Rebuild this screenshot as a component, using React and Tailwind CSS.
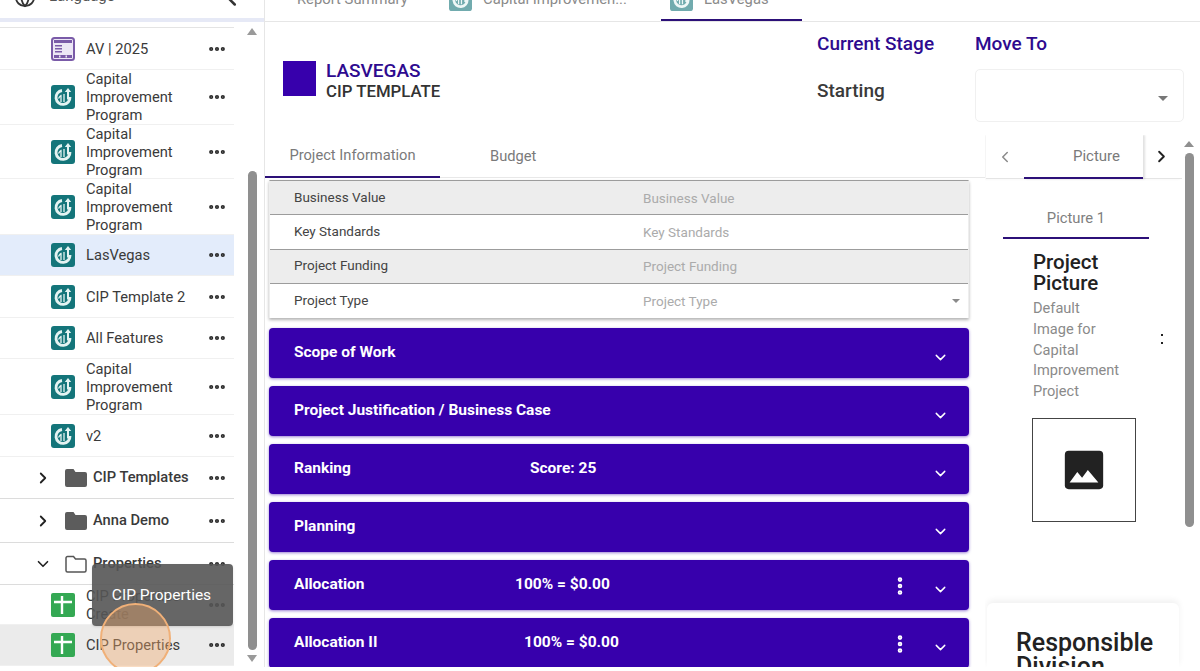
import React from "react";
import { ChevronRight, ChevronDown, ChevronLeft, MoreHorizontal, MoreVertical, Globe } from "lucide-react";

const Cip = ({ size = 24, className = "" }) => (
  <svg width={size} height={size} viewBox="0 0 24 24" className={className}>
    <rect width="24" height="24" rx="3" fill="#14757a" />
    <path d="M11 5.500a7 7 0 1 0 8 6.500" fill="none" stroke="#e4f3f2" strokeWidth="2.800" />
    <path d="M17 3l3.200 4H18v7.500h-2V7h-2.200z" fill="#e4f3f2" />
    <path d="M10 10.500V17M13 9v8M7.500 13.500c1-2 2-3 3-3.500" stroke="#e4f3f2" strokeWidth="1.300" fill="none" />
  </svg>
);
const Av = () => (
  <svg width="24" height="24" viewBox="0 0 24 24">
    <rect x="1" y="1" width="22" height="22" rx="2.500" fill="#ece7f5" stroke="#7a5ba8" strokeWidth="2" />
    <path d="M3 3h18v3H3zM4 8h7v1.500H4zM4 11h7v1.500H4zM4 14h7v1.500H4zM3 18h18v3H3z" fill="#7a5ba8" />
    <path d="M8 18.500h1.500v2H8zM14.500 18.500H16v2h-1.500z" fill="#ece7f5" />
  </svg>
);
const Sheet = () => (
  <svg width="24" height="24" viewBox="0 0 24 24">
    <rect width="24" height="24" rx="2" fill="#34a853" />
    <path d="M3 9h18M11 3v18" stroke="#fff" strokeWidth="2.400" fill="none" />
  </svg>
);
const Folder = ({ open }) =>
  open ? (
    <svg width="22" height="18" viewBox="0 0 22 18">
      <path d="M1 3a1.500 1.500 0 0 1 1.500-1.500h6L10.500 4h9A1.500 1.500 0 0 1 21 5.500v10a1.500 1.500 0 0 1-1.500 1.500h-17A1.500 1.500 0 0 1 1 15.500z" fill="#fff" stroke="#555" strokeWidth="1.500" />
    </svg>
  ) : (
    <svg width="22" height="18" viewBox="0 0 22 18">
      <path d="M0 2a2 2 0 0 1 2-2h6.500l2 3H20a2 2 0 0 1 2 2v11a2 2 0 0 1-2 2H2a2 2 0 0 1-2-2z" fill="#5c5c5c" />
    </svg>
  );

const Dots = () => <MoreHorizontal size={20} strokeWidth={3} className="text-[#2b2b2b] shrink-0" />;

const FileRow = ({ h, icon, lines, bg = "" }) => (
  <div className={`flex items-center pl-[51px] pr-[7px] border-b border-[#f0f0f0] ${bg}`} style={{ height: h }}>
    <div className="w-[35px] shrink-0 flex">{icon}</div>
    <div className="flex-1 text-[14.700px] leading-[18px] text-[#3a3a3a]">
      {lines.map((l) => (
        <div key={l}>{l}</div>
      ))}
    </div>
    <Dots />
  </div>
);

const CAP = ["Capital", "Improvement", "Program"];

const FolderRow = ({ h, label, open }) => (
  <div className="flex items-center pl-[34px] pr-[7px] border-b border-[#dcdcdc]" style={{ height: h }}>
    <div className="w-[31px] shrink-0">
      {open ? <ChevronDown size={18} strokeWidth={2.200} className="text-[#222]" /> : <ChevronRight size={18} strokeWidth={2.400} className="text-[#222]" />}
    </div>
    <div className="w-[28px] shrink-0 flex">
      <Folder open={open} />
    </div>
    <div className="flex-1 text-[14.700px] font-medium text-[#3a3a3a]">{label}</div>
    <Dots />
  </div>
);

const Sidebar = () => (
  <aside className="relative w-[265px] shrink-0 h-full flex flex-col border-r border-[#e6e6e6] overflow-hidden">
    <div className="h-[18px] shrink-0 overflow-hidden">
      <div className="flex items-center h-[24px] -mt-[15px] pl-[14px] w-full">
        <Globe size={22} className="text-[#333]" />
        <span className="ml-[13px] w-[72px] text-[15px] leading-[18px] -mt-[2px] text-[#555]">Language</span>
        <ChevronDown size={14} strokeWidth={3} className="ml-[32px] text-[#333]" />
        <ChevronLeft size={30} strokeWidth={2} className="ml-auto mr-[18px] text-[#333]" />
      </div>
    </div>
    <div className="h-[4px] shrink-0 bg-[#e6e9f6]" />
    <div className="flex flex-1 min-h-0 pt-[5px]">
      <div className="w-[234px] shrink-0 border-t border-[#e4e4e4]">
        <FileRow h={42} icon={<Av />} lines={["AV | 2025"]} />
        <FileRow h={55} icon={<Cip />} lines={CAP} />
        <FileRow h={54} icon={<Cip />} lines={CAP} />
        <FileRow h={56} icon={<Cip />} lines={CAP} />
        <FileRow h={41} icon={<Cip />} lines={["LasVegas"]} bg="bg-[#e3ecfb]" />
        <FileRow h={42} icon={<Cip />} lines={["CIP Template 2"]} />
        <FileRow h={41} icon={<Cip />} lines={["All Features"]} />
        <FileRow h={56} icon={<Cip />} lines={CAP} />
        <FileRow h={42} icon={<Cip />} lines={["v2"]} />
        <FolderRow h={42} label="CIP Templates" />
        <FolderRow h={44} label="Anna Demo" />
        <FolderRow h={42} label="Properties" open />
        <FileRow h={40} icon={<Sheet />} lines={["CIP Properties", "Create"]} />
        <FileRow h={41} icon={<Sheet />} lines={["CIP Properties"]} bg="bg-[#ebebeb]" />
      </div>
      <div className="w-[30px] flex flex-col items-center pl-[6px]">
        <div className="w-0 h-0 border-x-[5px] border-x-transparent border-b-[7px] border-b-[#9a9a9a] mt-[1px]" />
        <div className="h-[136px]" />
        <div className="w-[9px] h-[479px] rounded-full bg-[#8f8f8f]" />
        <div className="w-0 h-0 border-x-[5px] border-x-transparent border-t-[7px] border-t-[#9a9a9a] mt-[5px]" />
      </div>
    </div>
  </aside>
);

const MainTab = ({ label, icon, active, w, ml }) => (
  <div className={`h-[21px] overflow-hidden shrink-0 ${active ? "border-b-[2px] border-[#2c1078]" : ""}`} style={{ width: w, marginLeft: ml }}>
    <div className="flex items-center gap-[11px] -mt-[13px] pl-[9px] h-[24px] text-[14.800px] text-[#8a8a8a] whitespace-nowrap">
      {icon && <Cip size={23} className="opacity-60 shrink-0" />}
      <span>{label}</span>
    </div>
  </div>
);

const InfoRow = ({ label, gray, select }) => (
  <div className={`h-[34.250px] flex items-center border-b border-[#9c9c9c] text-[13.500px] ${gray ? "bg-[#ededed]" : "bg-white"}`}>
    <span className="w-[373px] pl-[24px] text-[#444] leading-[18px] -mt-[2px]">{label}</span>
    <span className="flex-1 text-[#ababab] leading-[18px]">{label}</span>
    {select && <div className="w-0 h-0 border-x-[4px] border-x-transparent border-t-[4px] border-t-[#8a8a8a] mr-[8px]" />}
  </div>
);

const Bar = ({ title, value, valueLeft, more }) => (
  <div className="relative h-[50px] shrink-0 rounded-[4px] bg-[#3700ac] shadow-[0_1px_3px_rgba(55,0,172,0.5)] text-white font-bold text-[15.500px]">
    <span className="absolute left-[25px] top-[14px] leading-[20px]">{title}</span>
    {value && <span className="absolute top-[14px] leading-[20px]" style={{ left: valueLeft }}>{value}</span>}
    {more && <MoreVertical size={22} strokeWidth={3} className="absolute left-[620px] top-[15px]" />}
    <ChevronDown size={17} strokeWidth={2} className="absolute left-[663px] top-[21px]" />
  </div>
);

const Right = () => (
  <div className="w-[215px] shrink-0 h-full flex overflow-hidden">
    <div className="w-[197px] shrink-0 h-full flex flex-col pl-[1px]">
      <div className="h-[44px] shrink-0 flex items-stretch border-b border-[#e4e4e4] shadow-[-2px_0_3px_rgba(0,0,0,0.05)]">
        <div className="w-[38px] flex items-center justify-center">
          <ChevronLeft size={18} className="text-[#8a8a8a] -ml-[1px]" />
        </div>
        <div className="w-[119px] border-b-[2px] border-[#2c1078] -mb-[1px] flex items-center justify-end pr-[23px] text-[15px] text-[#7a7a7a] shadow-[2px_0_2px_rgba(0,0,0,0.12)]">Picture</div>
        <div className="flex-1 flex items-center justify-center pr-[2px]">
          <ChevronRight size={19} strokeWidth={2.400} className="text-[#222]" />
        </div>
      </div>
      <div className="pl-[17px] pt-[21px] flex-1 min-h-0 flex flex-col">
        <div className="h-[39px] shrink-0 w-[146px] flex justify-center border-b-[2px] border-[#2c1078] text-[14.800px] text-[#808080] pt-[7px]">Picture 1</div>
        <div className="relative pl-[30px] pt-[13px]">
          <h2 className="text-[20.500px] leading-[21px] font-medium text-[#222]">
            Project<br />Picture
          </h2>
          <p className="mt-[4px] w-[90px] text-[14.600px] leading-[20.800px] text-[#8a8a8a]">Default Image for Capital Improvement Project</p>
          <div className="absolute left-[158px] top-[95px] flex flex-col gap-[6px]">
            <span className="w-[2px] h-[2px] bg-[#222]" />
            <span className="w-[2px] h-[2px] bg-[#222]" />
          </div>
          <div className="mt-[16px] -ml-[1px] w-[104px] h-[104px] border border-[#444] flex items-center justify-center">
            <svg width="46" height="46" viewBox="0 0 48 48">
              <path d="M8 4h32a4 4 0 0 1 4 4v32a4 4 0 0 1-4 4H8a4 4 0 0 1-4-4V8a4 4 0 0 1 4-4z" fill="#222" />
              <path d="M9 37l8-11 5 6 6-8 11 13z" fill="#fff" />
            </svg>
          </div>
        </div>
      </div>
      <div className="h-[64px] shrink-0 ml-[1px] mr-[3px] rounded-t-[6px] shadow-[0_-3px_6px_rgba(0,0,0,0.06)] pl-[29px] pt-[28px] overflow-hidden">
        <div className="text-[25px] leading-[24px] text-[#222] font-medium">Responsible Division</div>
      </div>
    </div>
    <div className="w-[14px] shrink-0 flex flex-col items-center pt-[6px]">
      <div className="w-0 h-0 border-x-[5px] border-x-transparent border-b-[6px] border-b-[#8f8f8f]" />
      <div className="w-[9px] h-[374px] mt-[6px] rounded-full bg-[#8f8f8f]" />
    </div>
  </div>
);

export default function App() {
  return (
    <div className="w-[1200px] h-[671px] bg-white font-['Roboto',sans-serif]">
      <div className="relative w-full h-[667px] overflow-hidden flex">
        <Sidebar />
        <main className="flex-1 min-w-0 h-full flex flex-col">
          <div className="h-[22px] shrink-0 border-b border-[#e6e6e6] flex">
            <MainTab label="Report Summary" w={150} ml={23} />
            <MainTab label="Capital Improvemen..." icon w={190} ml={2} />
            <MainTab label="LasVegas" icon w={141} ml={31} active />
          </div>
          <div className="flex flex-1 min-h-0 flex-col">
            <div className="h-[113px] shrink-0 flex">
              <div className="w-[552px] shrink-0 pl-[18px] pt-[39px] flex items-start">
                <div className="w-[33px] h-[35px] bg-[#3700ac]" />
                <div className="ml-[10px]">
                  <div className="text-[19px] leading-[20px] font-medium text-[#2e0a8f]">LASVEGAS</div>
                  <div className="text-[16.800px] leading-[20px] font-medium text-[#333]">CIP TEMPLATE</div>
                </div>
              </div>
              <div className="w-[158px] shrink-0 pt-[11px]">
                <div className="text-[19px] leading-[22px] font-medium text-[#2e0a8f]">Current Stage</div>
                <div className="mt-[25px] text-[19px] leading-[22px] font-medium text-[#3a3a3a]">Starting</div>
              </div>
              <div className="flex-1 pt-[11px]">
                <div className="text-[19px] leading-[22px] font-medium text-[#2e0a8f]">Move To</div>
                <div className="mt-[14px] w-[209px] h-[53px] rounded-[5px] border border-[#f0f0f0] flex items-end justify-end pb-[20px] pr-[15px]">
                  <div className="w-0 h-0 border-x-[5px] border-x-transparent border-t-[5px] border-t-[#777]" />
                </div>
              </div>
            </div>
            <div className="flex flex-1 min-h-0">
              <div className="w-[720px] shrink-0 flex flex-col pr-[16px] pl-[4px]">
                <div className="h-[43px] shrink-0 -ml-[4px] -mr-[16px] flex items-stretch">
                  <div className="w-[175px] border-b-[2px] border-[#2c1078] flex items-center justify-center text-[14.700px] text-[#7a7a7a]">Project Information</div>
                  <div className="flex-1 border-b border-[#e8e8e8] flex items-center pl-[50px] text-[14.700px] text-[#7a7a7a]">Budget</div>
                </div>
                <div className="mt-[2px] shrink-0 border-t border-[#9c9c9c] shadow-[0_2px_3px_rgba(0,0,0,0.3)] border-x border-x-[#eeeeee]">
                  <InfoRow label="Business Value" gray />
                  <InfoRow label="Key Standards" />
                  <InfoRow label="Project Funding" gray />
                  <div className="[&>div]:border-b-0">
                    <InfoRow label="Project Type" select />
                  </div>
                </div>
                <div className="mt-[10px] flex flex-col gap-[8px]">
                  <Bar title="Scope of Work" />
                  <Bar title="Project Justification / Business Case" />
                  <Bar title="Ranking" value="Score: 25" valueLeft={261} />
                  <Bar title="Planning" />
                  <Bar title="Allocation" value="100% = $0.00" valueLeft={246} more />
                  <Bar title="Allocation II" value="100% = $0.00" valueLeft={255} more />
                </div>
              </div>
              <Right />
            </div>
          </div>
        </main>
        <div className="absolute left-[92px] top-[564px] w-[141px] h-[62px] pt-[1px] pr-[2px] rounded-[4px] bg-[#555555]/90 flex items-center justify-center text-white text-[15.500px] shadow">CIP Properties</div>
        <div className="absolute left-[100px] top-[603px] w-[71px] h-[71px] rounded-full border-2 border-[#f0b078] bg-[#f0a868]/40" />
      </div>
    </div>
  );
}
